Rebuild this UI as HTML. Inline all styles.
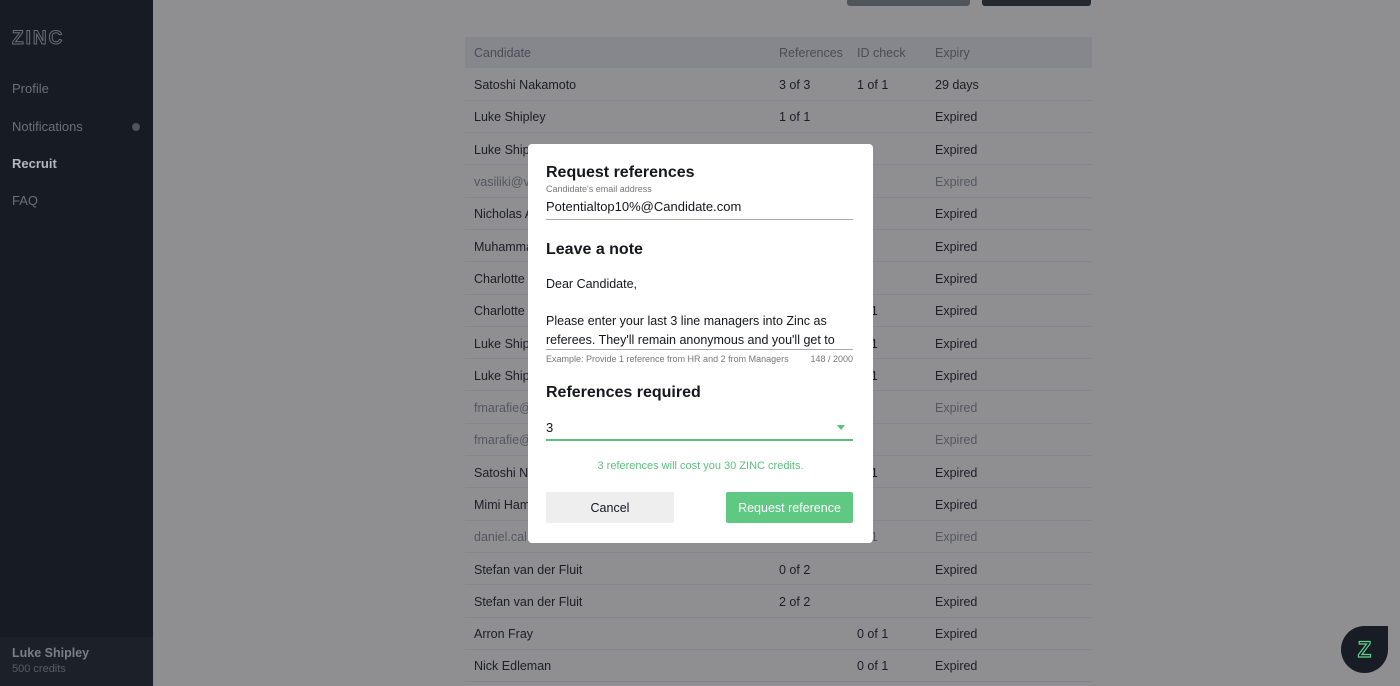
<!DOCTYPE html>
<html><head><style>
*{box-sizing:border-box;margin:0;padding:0}
body{width:1400px;height:686px;overflow:hidden;background:#8f8f92;font-family:"Liberation Sans",sans-serif;position:relative}
.side{position:absolute;left:0;top:0;width:153px;height:686px;background:#171b24}
.logo{position:absolute;left:12px;top:28px;font-size:19px;letter-spacing:2px;color:transparent;-webkit-text-stroke:1px #6b6f78;font-weight:bold}
.nav{position:absolute;left:12px;font-size:13px;color:#6b6f78}
.dot{position:absolute;left:132px;top:123px;width:8px;height:8px;border-radius:50%;background:#4e535c}
.user{position:absolute;left:0;top:637px;width:153px;height:49px;background:#1c2029}
.btn1{position:absolute;left:847px;top:0;width:123px;height:6px;background:#50545b;border-radius:0 0 3px 3px}
.btn2{position:absolute;left:982px;top:0;width:109px;height:6px;background:#25282e;border-radius:0 0 3px 3px}
table{position:absolute;left:465px;top:37px;width:627px;border-collapse:collapse;font-size:12.5px;color:#1c1e24}
th{height:31px;background:#85878c;text-align:left;font-weight:normal;color:#4a4d54;padding-left:9px}
td{height:32.3px;padding-left:9px;padding-top:2px;border-bottom:1px solid #84868a}
tr.g td{color:#54575d}
.modal{position:absolute;left:528px;top:144px;width:345px;height:399px;background:#fff;border-radius:4px;color:#15171c}
.modal h2{position:absolute;left:18px;font-size:16px;font-weight:bold}
.lbl{position:absolute;left:18px;top:40px;font-size:9px;color:#777}
.inp{position:absolute;left:18px;width:307px;font-size:13px;border-bottom:1px solid #aaa}
.p{position:absolute;left:18px;font-size:12.5px;width:310px;line-height:19px}
.green{color:#5dbf7f}
</style></head><body>
<div class="side">
<div class="logo">ZINC</div>
<div class="nav" style="top:81px">Profile</div>
<div class="nav" style="top:119px">Notifications</div>
<div class="dot"></div>
<div class="nav" style="top:156px;color:#b4b7bd;font-weight:bold">Recruit</div>
<div class="nav" style="top:193px">FAQ</div>
<div class="user"><div style="position:absolute;left:12px;top:9px;font-size:12.5px;color:#7a7e86;font-weight:bold">Luke Shipley</div><div style="position:absolute;left:12px;top:26px;font-size:11px;color:#585c64">500 credits</div></div>
</div>
<div class="btn1"></div><div class="btn2"></div>
<table>
<tr><th style="width:305px">Candidate</th><th style="width:78px">References</th><th style="width:78px">ID check</th><th>Expiry</th></tr>
<tr><td>Satoshi Nakamoto</td><td>3 of 3</td><td>1 of 1</td><td>29 days</td></tr>
<tr><td>Luke Shipley</td><td>1 of 1</td><td></td><td>Expired</td></tr>
<tr><td>Luke Shipley</td><td></td><td></td><td>Expired</td></tr>
<tr class="g"><td>vasiliki@v</td><td></td><td></td><td>Expired</td></tr>
<tr><td>Nicholas A</td><td></td><td></td><td>Expired</td></tr>
<tr><td>Muhammad</td><td></td><td></td><td>Expired</td></tr>
<tr><td>Charlotte</td><td></td><td></td><td>Expired</td></tr>
<tr><td>Charlotte</td><td></td><td>of 1</td><td>Expired</td></tr>
<tr><td>Luke Shipley</td><td></td><td>of 1</td><td>Expired</td></tr>
<tr><td>Luke Shipley</td><td></td><td>of 1</td><td>Expired</td></tr>
<tr class="g"><td>fmarafie@</td><td></td><td></td><td>Expired</td></tr>
<tr class="g"><td>fmarafie@</td><td></td><td></td><td>Expired</td></tr>
<tr><td>Satoshi N</td><td></td><td>of 1</td><td>Expired</td></tr>
<tr><td>Mimi Ham</td><td></td><td></td><td>Expired</td></tr>
<tr class="g"><td>daniel.cal</td><td></td><td>of 1</td><td>Expired</td></tr>
<tr><td>Stefan van der Fluit</td><td>0 of 2</td><td></td><td>Expired</td></tr>
<tr><td>Stefan van der Fluit</td><td>2 of 2</td><td></td><td>Expired</td></tr>
<tr><td>Arron Fray</td><td></td><td>0 of 1</td><td>Expired</td></tr>
<tr><td>Nick Edleman</td><td></td><td>0 of 1</td><td>Expired</td></tr>
</table>
<div class="modal">
<h2 style="top:20px">Request references</h2>
<div class="lbl">Candidate's email address</div>
<div class="inp" style="top:55px;height:21px">Potentialtop10%@Candidate.com</div>
<h2 style="top:97px">Leave a note</h2>
<div class="p" style="top:131px">Dear Candidate,</div>
<div class="p" style="top:168px;height:38px;overflow:hidden;border-bottom:1px solid #aaa;width:307px">Please enter your last 3 line managers into Zinc as referees. They'll remain anonymous and you'll get to</div>
<div style="position:absolute;left:18px;top:210px;width:307px;font-size:9px;color:#777;display:flex;justify-content:space-between"><span>Example: Provide 1 reference from HR and 2 from Managers</span><span>148 / 2000</span></div>
<h2 style="top:240px">References required</h2>
<div class="inp" style="top:276px;height:21px;border-bottom:2px solid #5dbf7f">3<span style="position:absolute;right:8px;top:5px;width:0;height:0;border-left:4px solid transparent;border-right:4px solid transparent;border-top:5px solid #5dbf7f"></span></div>
<div class="green" style="position:absolute;left:0;width:345px;text-align:center;top:316px;font-size:11px">3 references will cost you 30 ZINC credits.</div>
<div style="position:absolute;left:18px;top:348px;width:128px;height:31px;background:#eeeeee;border-radius:2px;text-align:center;line-height:32px;font-size:12.5px">Cancel</div>
<div style="position:absolute;left:198px;top:348px;width:127px;height:31px;background:#5fc883;border-radius:2px;text-align:center;line-height:32px;font-size:12.5px;color:#fff">Request reference</div>
</div>
<div style="position:absolute;left:1341px;top:626px;width:47px;height:47px;background:#181c25;border-radius:50% 0 50% 50%"><div style="position:absolute;left:0;top:11px;width:47px;text-align:center;font-size:22px;font-weight:bold;color:transparent;-webkit-text-stroke:1.2px #5fd08a">Z</div></div>
</body></html>
